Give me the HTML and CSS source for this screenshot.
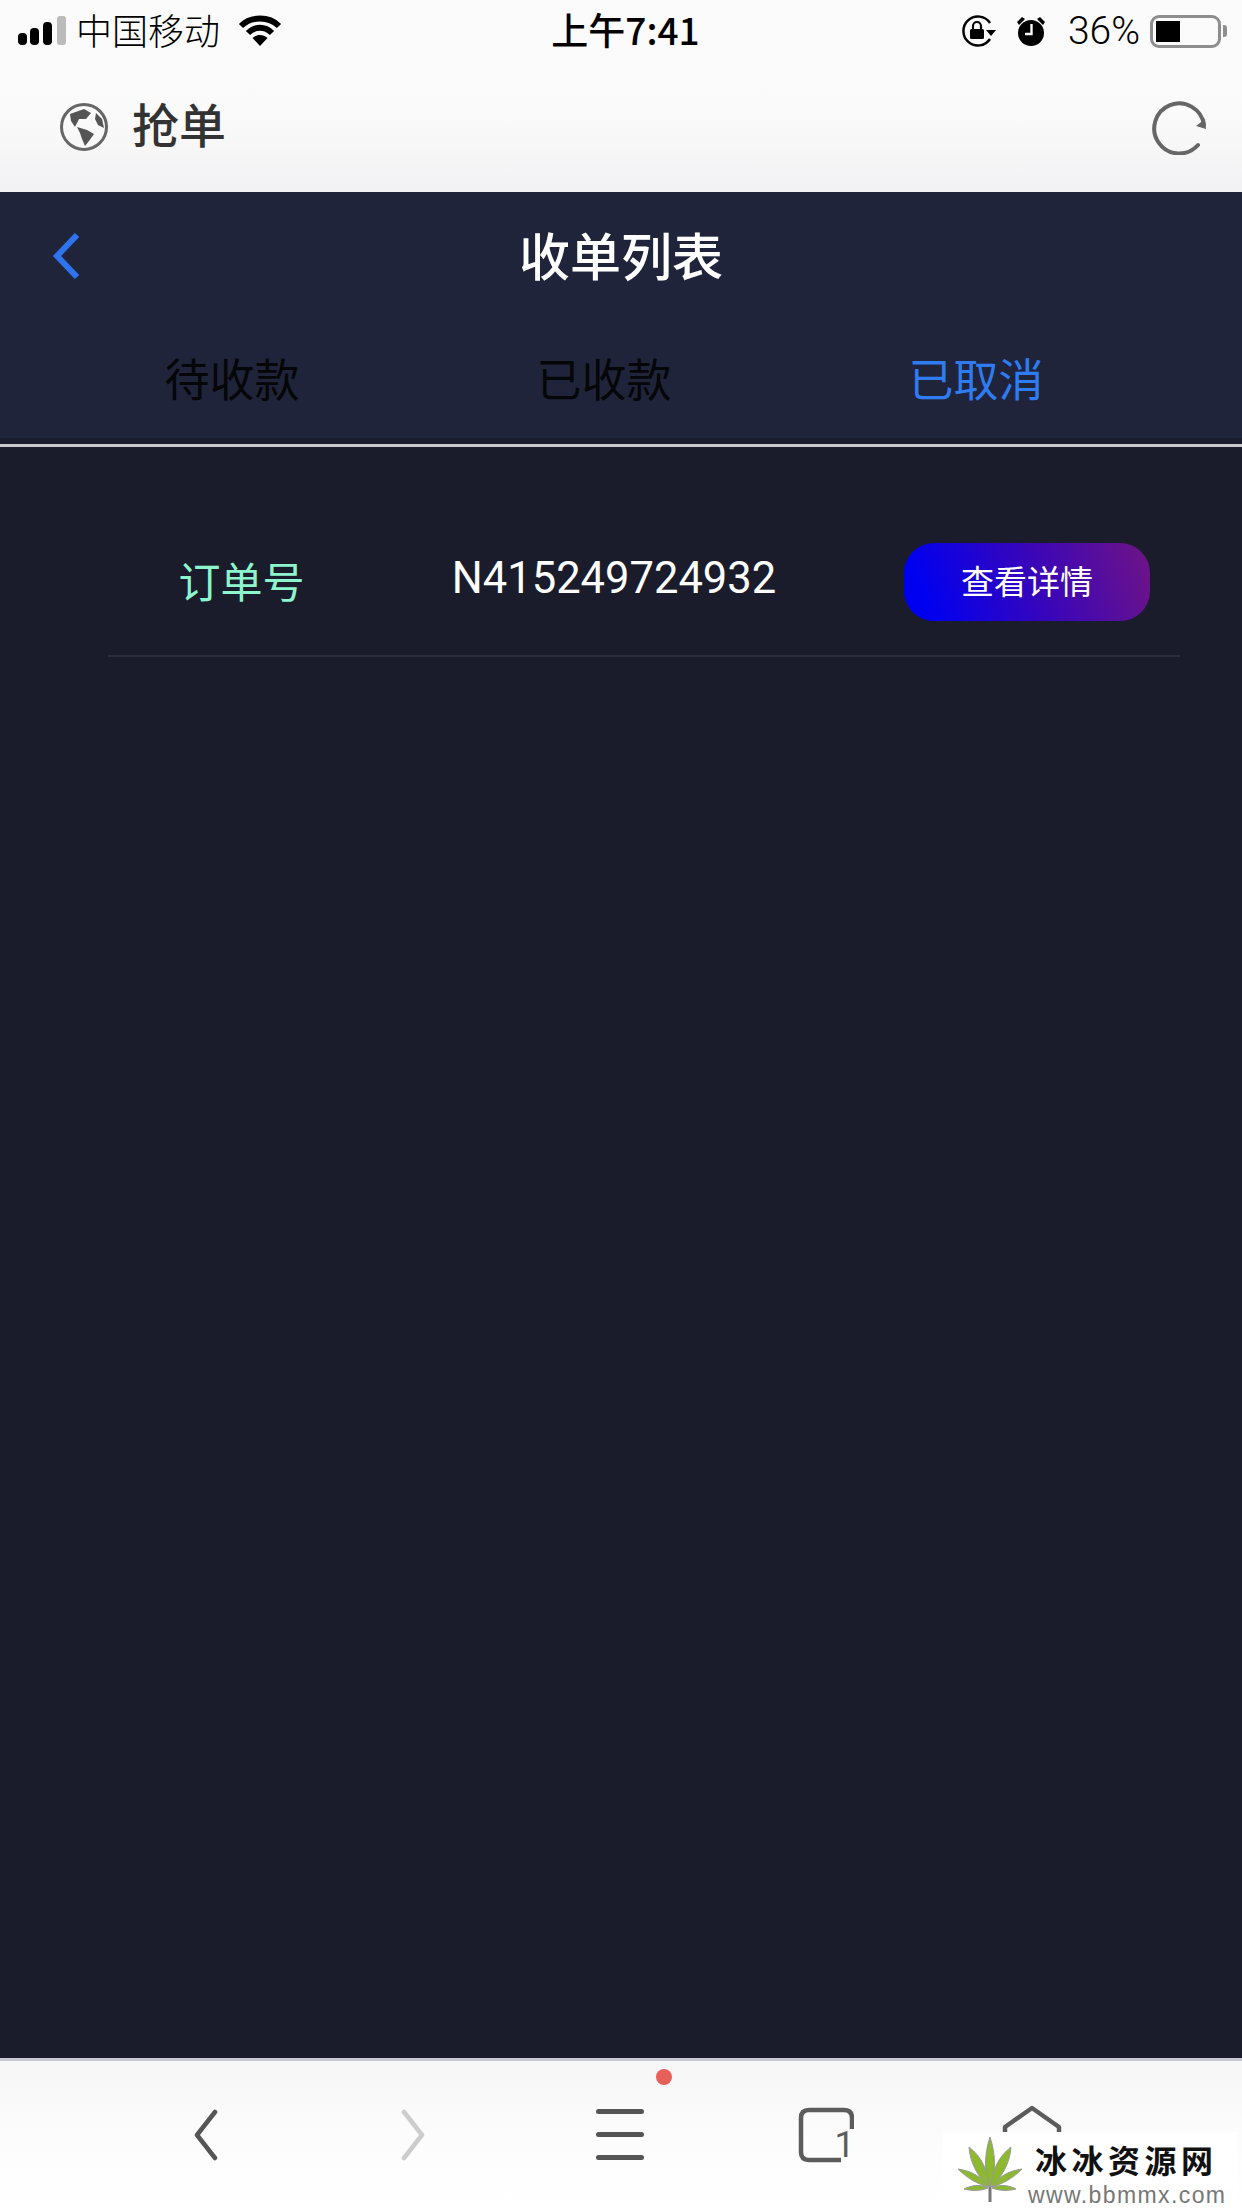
FILE: index.html
```html
<!DOCTYPE html>
<html lang="zh-CN">
<head>
    <meta charset="UTF-8">
    <meta name="viewport" content="width=device-width, initial-scale=1.0">
    <title>收单列表</title>
    <link rel="stylesheet" href="styles.css">
</head>
<body>
    <div class="browser-top">
        <div class="status-bar">
            <div class="status-left">
                <svg class="signal" width="48" height="30" viewBox="0 0 48 30">
                    <rect x="0" y="17" width="9" height="12" rx="4" fill="#000"/>
                    <rect x="12" y="12" width="9" height="17" rx="4" fill="#000"/>
                    <rect x="25" y="6" width="9" height="23" rx="4" fill="#000"/>
                    <rect x="39" y="0" width="9" height="29" rx="3" fill="#bbb"/>
                </svg>
                <span class="carrier">中国移动</span>
                <svg class="wifi" width="44" height="32" viewBox="0 0 44 32">
                    <path d="M3 11 C13 1 31 1 41 11" fill="none" stroke="#000" stroke-width="6"/>
                    <path d="M10 18 C17 11 27 11 34 18" fill="none" stroke="#000" stroke-width="6"/>
                    <path d="M14.500 23 C19 19 25 19 29.500 23 L22 31 Z" fill="#000"/>
                </svg>
            </div>
            <div class="status-time">上午7:41</div>
            <div class="status-right">
                <svg width="36" height="32" viewBox="0 0 36 32">
                    <path d="M29 24 A14.500 14.500 0 1 1 29 8" fill="none" stroke="#000" stroke-width="2.500"/>
                    <path d="M25 15 H35 L30 21 Z" fill="#000"/>
                    <rect x="9" y="14" width="14" height="10" rx="1.500" fill="#000"/>
                    <path d="M12 14 V11 A4 4 0 0 1 20 11 V14" fill="none" stroke="#000" stroke-width="2.200"/>
                </svg>
                <svg class="alarm" width="30" height="32" viewBox="0 0 30 32">
                    <circle cx="15" cy="18" r="13" fill="#000"/>
                    <path d="M1 7 L6 2 L9 4 L3 10 Z M29 7 L24 2 L21 4 L27 10 Z" fill="#000"/>
                    <path d="M15.500 9 V19 H9" fill="none" stroke="#fafafa" stroke-width="2.400"/>
                </svg>
                <span class="battery-text">36%</span>
                <div class="battery"><div class="battery-level"></div></div>
                <div class="battery-tip"></div>
            </div>
        </div>
        <div class="app-bar">
            <div class="app-title">
                <svg width="48" height="48" viewBox="0 0 48 48">
                    <circle cx="24" cy="24" r="22.500" fill="none" stroke="#666" stroke-width="3"/>
                    <path d="M10 11 L24 6 L31 10 L26 16 L19 16 L15 24 L11 18 Z" fill="#555"/>
                    <path d="M17 24 L27 27 L34 31 L29 38 L25 43 L22 36 L20 30 Z" fill="#555"/>
                    <path d="M36 10 L42 16 L44 25 L38 22 L35 16 Z" fill="#555"/>
                </svg>
                <span class="app-name">抢单</span>
            </div>
            <svg width="56" height="56" viewBox="0 0 56 56">
                <path d="M46 46 A25 25 0 1 1 52 26" fill="none" stroke="#666" stroke-width="4" stroke-linecap="round"/>
                <path d="M54 30 L44 27 L53 20 Z" fill="#666"/>
            </svg>
        </div>
    </div>

    <div class="nav">
        <div class="nav-head">
            <svg class="nav-back" width="28" height="46" viewBox="0 0 28 46">
                <path d="M25 2 L5 23 L25 44" fill="none" stroke="#2e74ee" stroke-width="6"/>
            </svg>
            <h1>收单列表</h1>
        </div>
        <div class="tabs">
            <div class="tab">待收款</div>
            <div class="tab">已收款</div>
            <div class="tab tab-active">已取消</div>
        </div>
    </div>

    <div class="main">
        <div class="nav-line"></div>
        <div class="order-row">
            <div class="order-label">订单号</div>
            <div class="order-number">N415249724932</div>
            <button class="order-btn">查看详情</button>
        </div>
    </div>

    <div class="toolbar">
        <svg width="24" height="52" viewBox="0 0 24 52">
            <path d="M21 3 L3 26 L21 49" fill="none" stroke="#555" stroke-width="4.500" stroke-linecap="round" stroke-linejoin="round"/>
        </svg>
        <svg width="24" height="52" viewBox="0 0 24 52">
            <path d="M3 3 L21 26 L3 49" fill="none" stroke="#ccc" stroke-width="4.500" stroke-linecap="round" stroke-linejoin="round"/>
        </svg>
        <div class="menu-btn">
            <div class="menu-line"></div>
            <div class="menu-line"></div>
            <div class="menu-line"></div>
            <div class="menu-dot"></div>
        </div>
        <div class="tabs-btn">
            <svg width="56" height="56" viewBox="0 0 56 56">
                <path d="M54 22 V11 Q54 3 46 3 H11 Q3 3 3 11 V45 Q3 53 11 53 H43" fill="none" stroke="#5c5c5c" stroke-width="4.500"/>
            </svg>
            <span class="tab-count">1</span>
        </div>
        <svg width="60" height="60" viewBox="0 0 60 60">
            <path d="M3 22 L30 3 L57 22 V55 H3 Z" fill="none" stroke="#5c5c5c" stroke-width="4.500" stroke-linejoin="round"/>
        </svg>
    </div>

    <div class="watermark">
        <svg width="68" height="66" viewBox="0 0 68 66">
            <path d="M34 0 C40 18 40 36 34 52 C28 36 28 18 34 0 Z" fill="#8cb92e" stroke="#999" stroke-width="1"/>
            <path d="M55 10 C54 26 46 40 35 50 C36 34 42 20 55 10 Z" fill="#8cb92e" stroke="#999" stroke-width="1"/>
            <path d="M13 10 C14 26 22 40 33 50 C32 34 26 20 13 10 Z" fill="#8cb92e" stroke="#999" stroke-width="1"/>
            <path d="M66 32 C56 42 46 47 36 50 C42 40 52 34 66 32 Z" fill="#8cb92e" stroke="#999" stroke-width="1"/>
            <path d="M2 32 C12 42 22 47 32 50 C26 40 16 34 2 32 Z" fill="#8cb92e" stroke="#999" stroke-width="1"/>
            <path d="M60 52 C52 54 44 54 36 51 C44 47 52 48 60 52 Z" fill="#8cb92e" stroke="#999" stroke-width="1"/>
            <path d="M8 52 C16 54 24 54 32 51 C24 47 16 48 8 52 Z" fill="#8cb92e" stroke="#999" stroke-width="1"/>
            <path d="M34 50 V65" stroke="#777" stroke-width="3"/>
        </svg>
        <div class="watermark-text">
            <div class="watermark-name">冰冰资源网</div>
            <div class="watermark-url">www.bbmmx.com</div>
        </div>
    </div>
</body>
</html>
```

FILE: styles.css
```css
body {
    font-family: "Noto Sans CJK SC", "Liberation Sans", sans-serif;
    margin: 0;
    width: 1242px;
    height: 2208px;
    display: flex;
    flex-direction: column;
    overflow: hidden;
    position: relative;
    background-color: #1a1c2b;
}
.browser-top {
    height: 192px;
    background: linear-gradient(#fbfbfb, #fafafa 60%, #f2f2f4);
}
.status-bar {
    height: 62px;
    display: grid;
    grid-template-columns: 1fr auto 1fr;
    align-items: center;
    padding: 0 15px 0 18px;
    color: #000;
}
.status-left, .status-right {
    display: flex;
    align-items: center;
}
.status-right {
    justify-content: flex-end;
}
.carrier {
    font-size: 36px;
    margin-left: 10px;
    margin-bottom: 4px;
    font-weight: 300;
    line-height: 40px;
}
.wifi {
    margin-left: 18px;
}
.status-time {
    font-size: 37px;
    line-height: 40px;
    font-weight: 500;
    margin-left: 6px;
    margin-bottom: 4px;
}
.alarm {
    margin-left: 19px;
}
.battery-text {
    font-family: Roboto, "Liberation Sans", sans-serif;
    font-size: 39px;
    font-weight: 300;
    line-height: 40px;
    margin-left: 22px;
    margin-right: 10px;
}
.battery {
    width: 59px;
    height: 21px;
    border: 3px solid #8e8e8e;
    border-radius: 9px;
    padding: 3px;
}
.battery-level {
    width: 24px;
    height: 100%;
    background: #000;
}
.battery-tip {
    width: 4px;
    height: 12px;
    margin-left: 2px;
    background: #8e8e8e;
    border-radius: 0 3px 3px 0;
}
.app-bar {
    height: 130px;
    display: flex;
    align-items: center;
    justify-content: space-between;
    padding: 0 34px 0 60px;
}
.app-title {
    display: flex;
    align-items: center;
    gap: 24px;
    color: #333;
}
.app-name {
    font-size: 47px;
    font-weight: 500;
    line-height: 60px;
    margin-bottom: 8px;
}
.nav {
    height: 246px;
    background-color: #1f243a;
}
.nav-head {
    height: 130px;
    display: flex;
    align-items: center;
    justify-content: center;
    position: relative;
}
.nav-back {
    position: absolute;
    left: 52px;
    top: 41px;
}
h1 {
    margin: 0 0 6px;
    font-size: 51px;
    font-weight: 500;
    line-height: 70px;
    color: #fff;
}
.tabs {
    height: 116px;
    display: grid;
    grid-template-columns: repeat(3, 372px);
    padding-left: 46px;
    align-items: center;
}
.tab {
    text-align: center;
    font-size: 45px;
    font-weight: 400;
    line-height: 60px;
    margin-bottom: 5px;
    color: #050608;
}
.tab-active {
    color: #2f7bf0;
}
.main {
    flex: 1;
    background-color: #1a1c2b;
    padding-top: 6px;
}
.nav-line {
    height: 3px;
    background-color: #c9c9cd;
}
.order-row {
    margin: 62px 62px 0 108px;
    height: 148px;
    display: grid;
    grid-template-columns: 267px 478px 1fr;
    align-items: center;
    padding-right: 30px;
    border-bottom: 2px solid #2a2d3a;
    box-sizing: border-box;
}
.order-label {
    text-align: center;
    font-size: 42px;
    font-weight: 400;
    line-height: 56px;
    margin-bottom: 4px;
    color: #8cf5cc;
}
.order-number {
    text-align: center;
    font-family: Roboto, "Liberation Sans", sans-serif;
    font-size: 43.500px;
    font-weight: 400;
    line-height: 50px;
    margin-bottom: 6px;
    color: #fff;
}
.order-btn {
    width: 246px;
    height: 78px;
    justify-self: end;
    border: 0;
    padding: 0 0 4px;
    border-radius: 30px;
    font-family: inherit;
    font-size: 33px;
    font-weight: 400;
    color: #fff;
    background: linear-gradient(70deg, #0000f0 10%, #3a06b8 55%, #701485);
}
.toolbar {
    height: 147px;
    border-top: 3px solid #c8c8d0;
    background: linear-gradient(#f6f6f6, #fcfcfc 50%, #fff);
    display: grid;
    grid-template-columns: repeat(5, 206.500px);
    padding-left: 103px;
    align-items: center;
    justify-items: center;
}
.menu-btn {
    width: 48px;
    display: flex;
    flex-direction: column;
    gap: 18px;
    position: relative;
    margin-left: 2px;
}
.menu-line {
    height: 5px;
    border-radius: 3px;
    background-color: #555;
}
.menu-dot {
    position: absolute;
    right: -28px;
    top: -40px;
    width: 16px;
    height: 16px;
    border-radius: 50%;
    background-color: #e8605a;
}
.tabs-btn {
    width: 56px;
    height: 56px;
    position: relative;
}
.tab-count {
    position: absolute;
    right: -1px;
    bottom: 3px;
    font-family: Roboto, "Liberation Sans", sans-serif;
    font-size: 36px;
    line-height: 30px;
    color: #5c5c5c;
}
.watermark {
    position: absolute;
    left: 943px;
    top: 2132px;
    width: 294px;
    height: 76px;
    background-color: #fff;
    display: flex;
    box-sizing: border-box;
    padding: 4px 0 0 13px;
    gap: 4px;
}
.watermark svg {
    margin-top: 1px;
}
.watermark-name {
    font-size: 32px;
    letter-spacing: 4.500px;
    font-weight: 700;
    line-height: 46px;
    color: #111;
    margin-left: 7px;
}
.watermark-url {
    font-family: "Liberation Sans", sans-serif;
    font-size: 23px;
    letter-spacing: 1.400px;
    line-height: 26px;
    color: #777;
}
```
